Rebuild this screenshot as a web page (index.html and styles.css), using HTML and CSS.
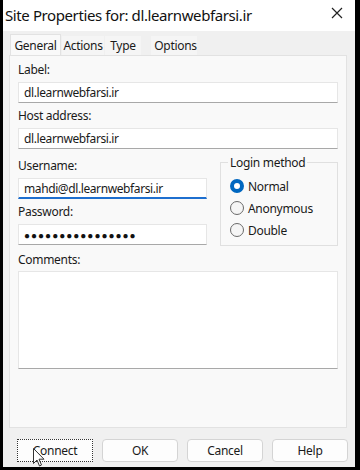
FILE: index.html
```html
<!DOCTYPE html>
<html lang="en">
<head>
    <meta charset="UTF-8">
    <title>Site Properties</title>
    <link rel="stylesheet" href="styles.css">
</head>
<body>
    <div class="window">
        <div class="titlebar">
            <span class="title">Site Properties for: dl.learnwebfarsi.ir</span>
            <svg class="close" width="12" height="12" viewBox="0 0 12 12"><path d="M1 1 L11 11 M11 1 L1 11" stroke="#222" stroke-width="1.2"/></svg>
        </div>

        <div class="tabs">
            <div class="tab active">General</div>
            <div class="tab tab-actions">Actions</div>
            <div class="tab tab-type">Type</div>
            <div class="tab tab-options">Options</div>
        </div>

        <div class="panel">
            <label class="field-label">Label:</label>
            <div class="input">dl.learnwebfarsi.ir</div>

            <label class="field-label">Host address:</label>
            <div class="input">dl.learnwebfarsi.ir</div>

            <div class="login-row">
                <div class="login-fields">
                    <label class="field-label">Username:</label>
                    <div class="input focused">mahdi@dl.learnwebfarsi.ir</div>
                    <label class="field-label">Password:</label>
                    <div class="input password">●●●●●●●●●●●●●●●●</div>
                </div>
                <fieldset class="method">
                    <legend>Login method</legend>
                    <div class="radio checked"><span class="dot"></span>Normal</div>
                    <div class="radio"><span class="dot"></span>Anonymous</div>
                    <div class="radio"><span class="dot"></span>Double</div>
                </fieldset>
            </div>

            <label class="field-label comments-label">Comments:</label>
            <div class="textarea"></div>
        </div>

        <div class="buttons">
            <div class="btn default">Connect</div>
            <div class="btn">OK</div>
            <div class="btn">Cancel</div>
            <div class="btn">Help</div>
            <svg class="cursor" width="12" height="19" viewBox="0 0 12 19"><path d="M0.5 0.5 L0.5 15.5 L4 12 L6.5 18 L8.5 17 L6 11.2 L11 11.2 Z" fill="#fff" stroke="#333" stroke-width="1"/></svg>
        </div>
    </div>
</body>
</html>
```

FILE: styles.css
```css
* {
    box-sizing: border-box;
}
body {
    margin: 0;
    background: #000;
    font-family: "Noto Sans", "Open Sans", sans-serif;
    color: #1a1a1a;
}
.window {
    width: 352px;
    height: 467px;
    margin-left: 3px;
    background: #f0f0f0;
    display: flex;
    flex-direction: column;
}
.titlebar {
    height: 31px;
    background: #fff;
    display: flex;
    align-items: center;
    justify-content: space-between;
    padding: 0 12px 2px 2px;
    flex-shrink: 0;
}
.title {
    font-size: 15px;
    letter-spacing: -0.4px;
    color: #111;
}
.close {
    margin-bottom: 4px;
}
.tabs {
    display: flex;
    margin: 3px 0 0 7px;
    height: 21px;
    align-items: flex-end;
}
.tab {
    font-size: 12px;
    letter-spacing: -0.3px;
    height: 19px;
    line-height: 19px;
    text-align: center;
    background: #f5f5f5;
    margin-right: 1px;
}
.tab.active {
    width: 51px;
    height: 21px;
    line-height: 21px;
    background: #f9f9f9;
    border: 1px solid #e2e2e2;
    border-bottom: none;
}
.tab-actions {
    width: 42px;
}
.tab-type {
    width: 36px;
    margin-right: 10px;
}
.tab-options {
    width: 46px;
    padding-left: 3px;
}
.panel {
    margin: 0 8px 0 6px;
    height: 373px;
    background: #f9f9f9;
    border: 1px solid #e2e2e2;
    padding: 2px 8px 0 8px;
    display: flex;
    flex-direction: column;
}
.field-label {
    font-size: 12px;
    letter-spacing: -0.3px;
    height: 22px;
    line-height: 20px;
    margin-top: 2px;
}
.comments-label {
    margin-top: 4px;
    height: 21px;
}
.input {
    height: 21px;
    line-height: 20px;
    background: #fff;
    border: 1px solid #e6e6e6;
    border-bottom-color: #a8a8a8;
    padding-left: 5px;
    font-size: 12px;
    letter-spacing: -0.4px;
    margin-bottom: 1px;
}
.input.focused {
    border-bottom: 2px solid #1e6fcf;
}
.input.password {
    font-size: 10px;
    letter-spacing: 1px;
    line-height: 21px;
    color: #111;
}
.login-row {
    display: flex;
    gap: 13px;
    margin-top: 4px;
}
.login-fields {
    width: 189px;
    display: flex;
    flex-direction: column;
}
.method {
    flex: 1;
    margin: 0;
    padding: 4px 0 0 9px;
    border: 1px solid #e0e0e0;
    height: 92px;
}
.method legend {
    font-size: 12px;
    letter-spacing: -0.3px;
    padding: 0 2px;
    margin-left: -2px;
}
.radio {
    display: flex;
    align-items: center;
    font-size: 12px;
    letter-spacing: -0.3px;
    height: 22px;
}
.radio .dot {
    width: 14px;
    height: 14px;
    border: 1px solid #6a6a6a;
    border-radius: 50%;
    background: #f5f5f5;
    margin-right: 4px;
}
.radio.checked .dot {
    border: 4.5px solid #0067c0;
    background: #fff;
}
.textarea {
    height: 98px;
    background: #fff;
    border: 1px solid #e6e6e6;
    border-bottom-color: #a8a8a8;
}
.buttons {
    display: flex;
    gap: 9px;
    margin: 11px 0 0 14px;
    position: relative;
}
.btn {
    width: 76px;
    height: 23px;
    line-height: 21px;
    text-align: center;
    font-size: 12px;
    letter-spacing: -0.3px;
    background: #fdfdfd;
    border: 1px solid #d4d4d4;
    border-radius: 4px;
}
.btn.default {
    border: 1px dotted #333;
    border-radius: 0;
}
.cursor {
    position: absolute;
    left: 16px;
    top: 9px;
}
```
